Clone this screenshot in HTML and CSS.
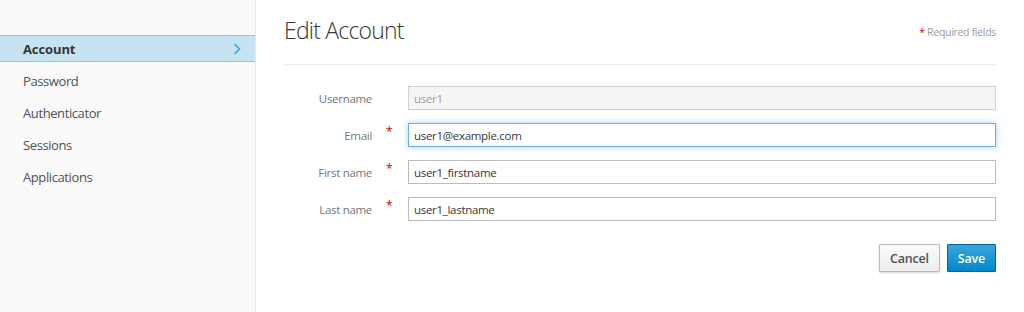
FILE: index.html
```html
<!DOCTYPE html>
<html lang="en">
<head>
    <meta charset="UTF-8">
    <meta name="viewport" content="width=device-width, initial-scale=1.0">
    <title>Edit Account</title>
    <link rel="stylesheet" href="styles.css">
</head>
<body>
    <div class="page">
        <aside class="sidebar">
            <ul class="nav">
                <li class="active">
                    <a href="#">Account</a>
                    <svg class="chevron" width="8" height="12" viewBox="0 0 8 12">
                        <path d="M1.5 1 L6.5 6 L1.5 11" fill="none" stroke="#39a5dc" stroke-width="1.6"/>
                    </svg>
                </li>
                <li><a href="#">Password</a></li>
                <li><a href="#">Authenticator</a></li>
                <li><a href="#">Sessions</a></li>
                <li><a href="#">Applications</a></li>
            </ul>
        </aside>

        <main class="content">
            <div class="page-header">
                <h1>Edit Account</h1>
                <span class="subtitle"><span class="required">*</span> Required fields</span>
            </div>

            <form class="form">
                <label class="label" for="username">Username</label>
                <span class="req"></span>
                <input id="username" type="text" value="user1" disabled>

                <label class="label" for="email">Email</label>
                <span class="req">*</span>
                <input id="email" class="focused" type="text" value="user1@example.com">

                <label class="label" for="firstName">First name</label>
                <span class="req">*</span>
                <input id="firstName" type="text" value="user1_firstname">

                <label class="label" for="lastName">Last name</label>
                <span class="req">*</span>
                <input id="lastName" type="text" value="user1_lastname">

                <div class="buttons">
                    <button type="button" class="btn btn-default">Cancel</button>
                    <button type="submit" class="btn btn-primary">Save</button>
                </div>
            </form>
        </main>
    </div>
</body>
</html>
```

FILE: styles.css
```css
body {
    margin: 0;
    padding: 0;
    font-family: "Open Sans", "Noto Sans", sans-serif;
    background-color: #fff;
    color: #363636;
}
.page {
    display: flex;
    height: 312px;
}
.sidebar {
    width: 255px;
    background-color: #fafafa;
    border-right: 1px solid #e6e6e6;
    padding-top: 35px;
}
.nav {
    list-style: none;
    margin: 0;
    padding: 0;
}
.nav li {
    display: flex;
    align-items: center;
    justify-content: space-between;
    height: 25px;
    margin-bottom: 5px;
    padding: 0 14px 0 23px;
    border-top: 1px solid transparent;
    border-bottom: 1px solid transparent;
}
.nav li a {
    color: #4d5258;
    text-decoration: none;
    font-size: 13px;
    letter-spacing: -0.4px;
}
.nav li.active {
    background-color: #c5e3f1;
    border-color: #88c7ea;
}
.nav li.active a {
    font-weight: bold;
    color: #363636;
    letter-spacing: -0.1px;
}
.chevron {
    display: block;
}
.content {
    flex: 1;
    padding: 12px 28px 0 28px;
}
.page-header {
    display: flex;
    justify-content: space-between;
    align-items: center;
    padding-bottom: 16px;
    border-bottom: 1px solid #ededed;
}
h1 {
    margin: 0;
    font-size: 23px;
    font-weight: 300;
    letter-spacing: -0.8px;
    line-height: 36px;
    color: #363636;
}
.subtitle {
    margin-top: 3px;
    font-size: 10.5px;
    letter-spacing: -0.3px;
    color: #9c9c9c;
}
.required, .req {
    color: #c00;
}
.form {
    display: grid;
    grid-template-columns: 88px 36px 1fr;
    row-gap: 13px;
    margin-top: 21px;
    align-items: center;
}
.label {
    text-align: right;
    font-size: 11.5px;
    letter-spacing: -0.3px;
    color: #72767b;
}
.req {
    padding-left: 14px;
    font-size: 12px;
    align-self: start;
    line-height: 18px;
}
input[type="text"] {
    height: 24px;
    box-sizing: border-box;
    padding: 2px 5px;
    border: 1px solid #bbb;
    font-family: inherit;
    font-size: 11.5px;
    letter-spacing: -0.3px;
    color: #363636;
    outline: none;
}
input[disabled] {
    background-color: #f5f5f5;
    border-color: #d1d1d1;
    color: #9c9c9c;
}
input.focused {
    border-color: #66afe9;
    box-shadow: 0 0 6px rgba(102, 175, 233, 0.6);
}
.buttons {
    grid-column: 1 / 4;
    display: flex;
    justify-content: flex-end;
    gap: 7px;
    margin-top: 10px;
}
.btn {
    height: 28px;
    padding: 0 10px;
    border-radius: 1px;
    font-family: inherit;
    font-size: 12.5px;
    font-weight: 600;
    letter-spacing: -0.2px;
    cursor: pointer;
}
.btn-default {
    background: linear-gradient(#fafafa, #ededed);
    border: 1px solid #bbb;
    color: #4d5258;
    box-shadow: 0 1px 2px rgba(0,0,0,0.15);
}
.btn-primary {
    background: linear-gradient(#39a5dc, #0088ce);
    border: 1px solid #00659c;
    color: #fff;
}
```
